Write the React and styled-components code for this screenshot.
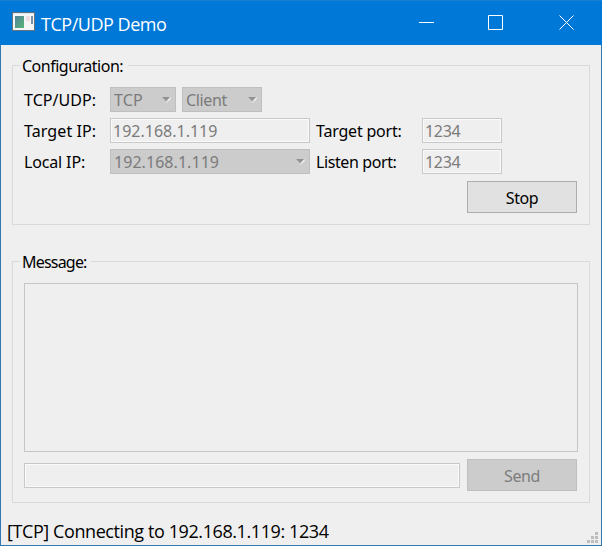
import React from "react";
import styled, { createGlobalStyle, css } from "styled-components";

const GlobalStyle = createGlobalStyle`
  * { box-sizing: border-box; }
  body { margin: 0; overflow: hidden; background: #efefef; }
`;

const Window = styled.div`
  width: 602px;
  height: 546px;
  display: flex;
  flex-direction: column;
  background: #efefef;
  border: 1px solid #3278b4;
  border-top: 0;
  font-family: "Noto Sans", sans-serif;
  font-size: 16px;
  line-height: 24px;
  color: #000;
  white-space: nowrap;
`;

const TitleBar = styled.header`
  height: 45px;
  flex: none;
  margin: 0 -1px;
  padding-left: 12px;
  display: flex;
  align-items: center;
  background: #0078d7;
  border-top: 1px solid #1a7fd0;
  color: #fff;
  > svg { margin-top: -3px; }
`;

const Title = styled.h1`
  margin: 1px 0 0 6px;
  flex: 1;
  font: 400 18px/24px "Open Sans", sans-serif;
  letter-spacing: ${(p) => p.$spacing}px;
`;

const Controls = styled.div`
  display: flex;
  height: 44px;
`;

const ControlButton = styled.button`
  width: ${(p) => p.$width}px;
  height: 44px;
  padding: 14px 0 0;
  border: 0;
  background: none;
  display: flex;
  align-items: flex-start;
  justify-content: flex-start;
`;

const Body = styled.main`
  flex: 1;
  display: flex;
  flex-direction: column;
  padding: 20px 11px 0;
`;

const Group = styled.fieldset`
  margin: 0 0 ${(p) => p.$after || 0}px;
  min-width: 0;
  width: 578px;
  height: ${(p) => p.$height}px;
  border: 1px solid #d9d9d9;
  padding: 0 11px;
  display: flow-root;
`;

const Caption = styled.div`
  width: ${(p) => p.$width}px;
  height: 21px;
  margin: -12px 0 0 -4px;
  padding-left: 2px;
  background: #efefef;
  letter-spacing: ${(p) => p.$spacing}px;
`;

const Form = styled.div`
  display: grid;
  grid-template-columns: 86px 206px 106px 80px;
  grid-auto-rows: 25px;
  row-gap: 6px;
  padding-top: 12px;
`;

const Label = styled.label`
  line-height: 26px;
  letter-spacing: ${(p) => p.$spacing}px;
`;

const Pair = styled.div`
  grid-column: 2 / -1;
  display: flex;
  gap: 6px;
`;

const fieldBox = css`
  width: ${(p) => p.$width}px;
  height: 25px;
  border: 1px solid #c8c8c8;
  color: #7b7b7b;
  line-height: 25px;
  letter-spacing: ${(p) => p.$spacing || 0}px;
`;

const Field = styled.div`
  ${fieldBox}
  padding-left: 2px;
  box-shadow: inset 0 0 0 1px #fafafa;
`;

const SelectBox = styled.div`
  ${fieldBox}
  display: flex;
  justify-content: space-between;
  padding: 0 4px 0 3px;
  background: #cccccc;
  border-color: #bfbfbf;
  svg { margin-top: 9px; flex: none; }
`;

const Actions = styled.div`
  display: flex;
  justify-content: flex-end;
  padding: 7px 1px 0 0;
`;

const PushButton = styled.button`
  width: 110px;
  height: 32px;
  flex: none;
  padding: 1px 0 0;
  font: inherit;
  letter-spacing: ${(p) => p.$spacing}px;
  color: #000;
  background: #e1e1e1;
  border: 1px solid #adadad;
  &:disabled { color: #7d7d7d; background: #cccccc; border-color: #bfbfbf; }
`;

const MessageArea = styled.div`
  margin-top: 12px;
  width: 554px;
  height: 169px;
  border: 1px solid #c5c5c5;
`;

const SendRow = styled.div`
  display: flex;
  align-items: center;
  justify-content: space-between;
  padding: 7px 1px 0 0;
`;

const StatusBar = styled.footer`
  height: 30px;
  flex: none;
  display: flex;
  justify-content: space-between;
  padding: 3px 3px 0 6px;
  font: 400 18px/26px "Open Sans", sans-serif;
  letter-spacing: ${(p) => p.$spacing}px;
  svg { margin-top: 14px; }
`;

const AppIcon = () => (
  <svg width="23" height="19" viewBox="0 0 23 19">
    <defs>
      <linearGradient id="screen" x1="0" y1="0" x2="1" y2="1">
        <stop offset="0" stopColor="#527f9b" />
        <stop offset="1" stopColor="#58b777" />
      </linearGradient>
    </defs>
    <rect x=".5" y=".5" width="22" height="18" fill="#f4f6f7" stroke="#66717e" />
    <path d="M1 1.5h21" stroke="#dce5ee" />
    <rect x="3" y="4" width="9" height="12" fill="url(#screen)" />
    <rect x="14" y="4" width="4" height="5" fill="#f2dde5" />
    <path d="M20 4v8" stroke="#7892a5" strokeWidth="2" />
  </svg>
);

const Arrow = () => (
  <svg width="9" height="6" viewBox="0 0 9 6">
    <path d="M3 5.5h2l3.5-3.5V0L5 5z" fill="#fff" />
    <path d="M0 0h8L4 4z" fill="#929292" />
  </svg>
);

const Select = ({ width, spacing, children }) => (
  <SelectBox $width={width} $spacing={spacing}>
    {children}
    <Arrow />
  </SelectBox>
);

const controls = [
  { name: "Minimize", width: 69, d: "M0 7.5h15" },
  { name: "Maximize", width: 71, d: "M.5.5h14v14H.5z" },
  { name: "Close", width: 43, d: "M.5.5l14 14M14.5.5l-14 14" },
];

const Grip = () => (
  <svg width="11" height="11" viewBox="0 0 11 11" fill="#bdbdbd">
    {[[8, 0], [4, 4], [8, 4], [0, 8], [4, 8], [8, 8]].map(([x, y]) => (
      <rect key={`${x}-${y}`} x={x} y={y} width="3" height="3" />
    ))}
  </svg>
);

export default function App() {
  return (
    <>
      <GlobalStyle />
      <Window>
        <TitleBar>
          <AppIcon />
          <Title $spacing={-0.47}>TCP/UDP Demo</Title>
          <Controls>
            {controls.map(({ name, width, d }) => (
              <ControlButton key={name} aria-label={name} $width={width}>
                <svg width="15" height="15" viewBox="0 0 15 15" fill="none" stroke="#fff">
                  <path d={d} />
                </svg>
              </ControlButton>
            ))}
          </Controls>
        </TitleBar>
        <Body>
          <Group $height={160} $after={36}>
            <Caption $width={108} $spacing={-0.5}>Configuration:</Caption>
            <Form>
              <Label $spacing={0.05}>TCP/UDP:</Label>
              <Pair>
                <Select width={66} spacing={0.1}>TCP</Select>
                <Select width={80} spacing={-0.35}>Client</Select>
              </Pair>
              <Label $spacing={0.1}>Target IP:</Label>
              <Field $width={200} $spacing={0}>192.168.1.119</Field>
              <Label $spacing={-0.2}>Target port:</Label>
              <Field $width={80} $spacing={-0.3}>1234</Field>
              <Label $spacing={-0.15}>Local IP:</Label>
              <Select width={200} spacing={0.05}>192.168.1.119</Select>
              <Label $spacing={-0.4}>Listen port:</Label>
              <Field $width={80} $spacing={-0.3}>1234</Field>
            </Form>
            <Actions>
              <PushButton $spacing={-0.4}>Stop</PushButton>
            </Actions>
          </Group>
          <Group $height={242}>
            <Caption $width={71} $spacing={-0.8}>Message:</Caption>
            <MessageArea />
            <SendRow>
              <Field $width={436} />
              <PushButton $spacing={-0.4} disabled>Send</PushButton>
            </SendRow>
          </Group>
        </Body>
        <StatusBar $spacing={-0.41}>
          [TCP] Connecting to 192.168.1.119: 1234
          <Grip />
        </StatusBar>
      </Window>
    </>
  );
}
